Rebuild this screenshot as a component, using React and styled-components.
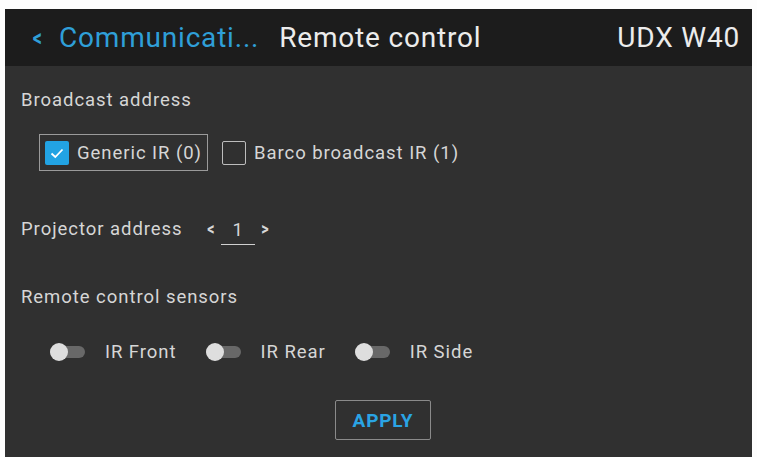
import styled, { createGlobalStyle } from "styled-components"

const Global = createGlobalStyle`
  html, body { margin: 0; padding: 0; background: #ffffff; }
  body { font-family: Roboto, "Liberation Sans", sans-serif; }
`

const Frame = styled.div`
  width: 757px;
  height: 457px;
  box-sizing: border-box;
  padding: 9px 5px 0 5px;
  background: #fdfdfd;
  overflow: hidden;
`

const Screen = styled.div`
  height: 100%;
  display: flex;
  flex-direction: column;
  background: #303030;
`

const Header = styled.div`
  height: 57px;
  flex-shrink: 0;
  display: flex;
  align-items: center;
  padding: 0 12px 0 26px;
  background: #1c1c1c;
  font-size: 28px;
  letter-spacing: 0.8px;
  color: #ececec;
`

const Back = styled.span`
  color: #2f9fd8;
  font-size: 24px;
  font-weight: 700;
  margin-right: 15px;
  transform: scaleX(0.75);
`

const Crumb = styled.span`
  color: #2f9fd8;
  margin-right: 20px;
`

const Title = styled.span`
  flex: 1;
`

const Model = styled.span``

const Body = styled.div`
  flex: 1;
  padding: 22px 16px 0 16px;
  color: #d6d6d6;
  font-size: 18.5px;
  letter-spacing: 0.95px;
  line-height: 24px;
`

const Label = styled.div`
  line-height: 24px;
`

const CheckRow = styled.div`
  display: flex;
  align-items: center;
  gap: 8px;
  margin: 22px 0 0 18px;
`

const CheckItem = styled.div`
  display: flex;
  align-items: center;
  gap: 8px;
  height: 35px;
  padding: 0 5px;
  border: 1px solid ${p => (p.$focused ? "#9a9a9a" : "transparent")};
`

const Box = styled.span`
  width: 24px;
  height: 24px;
  box-sizing: border-box;
  display: flex;
  align-items: center;
  justify-content: center;
  border: ${p => (p.$checked ? "none" : "1.5px solid #bdbdbd")};
  border-radius: 2px;
  background: ${p => (p.$checked ? "#22a3e3" : "transparent")};
`

const AddressRow = styled.div`
  display: flex;
  align-items: center;
  margin-top: 41px;
`

const Stepper = styled.div`
  display: flex;
  align-items: center;
  margin-left: 23px;
  gap: 5px;
`

const Arrow = styled.span`
  font-size: 19px;
  font-weight: 700;
  transform: scaleX(0.75);
`

const Value = styled.span`
  width: 34px;
  text-align: center;
  padding-bottom: 2px;
  border-bottom: 1px solid #d0d0d0;
  margin-top: 6px;
`

const Sensors = styled.div`
  margin-top: 40px;
`

const ToggleRow = styled.div`
  display: flex;
  align-items: center;
  margin: 31px 0 0 29px;
`

const Toggle = styled.div`
  display: flex;
  align-items: center;
  gap: 20px;
  margin-right: 29px;
`

const Track = styled.span`
  position: relative;
  width: 35px;
  height: 12px;
  border-radius: 6px;
  background: #686868;

  &::before {
    content: "";
    position: absolute;
    left: 0;
    top: -3px;
    width: 18px;
    height: 18px;
    border-radius: 50%;
    background: #dedede;
  }
`

const Footer = styled.div`
  display: flex;
  justify-content: center;
  margin-top: 36px;
  padding-left: 9px;
`

const Apply = styled.button`
  width: 96px;
  height: 40px;
  background: transparent;
  border: 1.5px solid #8a8a8a;
  border-radius: 2px;
  color: #2aa4e4;
  font-family: inherit;
  font-weight: 700;
  font-size: 19px;
  letter-spacing: 0.8px;
`

const Tick = () => (
  <svg width="16" height="16" viewBox="0 0 16 16">
    <path d="M2.5 8.5 L6.3 12 L13.5 4.5" fill="none" stroke="#ffffff" strokeWidth="1.8" />
  </svg>
)

const sensors = ["IR Front", "IR Rear", "IR Side"]

export default function App() {
  return (
    <Frame>
      <Global />
      <Screen>
        <Header>
          <Back>&lt;</Back>
          <Crumb>Communicati...</Crumb>
          <Title>Remote control</Title>
          <Model>UDX W40</Model>
        </Header>
        <Body>
          <Label>Broadcast address</Label>
          <CheckRow>
            <CheckItem $focused>
              <Box $checked><Tick /></Box>
              Generic IR (0)
            </CheckItem>
            <CheckItem>
              <Box />
              Barco broadcast IR (1)
            </CheckItem>
          </CheckRow>
          <AddressRow>
            <Label>Projector address</Label>
            <Stepper>
              <Arrow>&lt;</Arrow>
              <Value>1</Value>
              <Arrow>&gt;</Arrow>
            </Stepper>
          </AddressRow>
          <Sensors>
            <Label>Remote control sensors</Label>
          </Sensors>
          <ToggleRow>
            {sensors.map(s => (
              <Toggle key={s}>
                <Track />
                {s}
              </Toggle>
            ))}
          </ToggleRow>
          <Footer>
            <Apply>APPLY</Apply>
          </Footer>
        </Body>
      </Screen>
    </Frame>
  )
}
